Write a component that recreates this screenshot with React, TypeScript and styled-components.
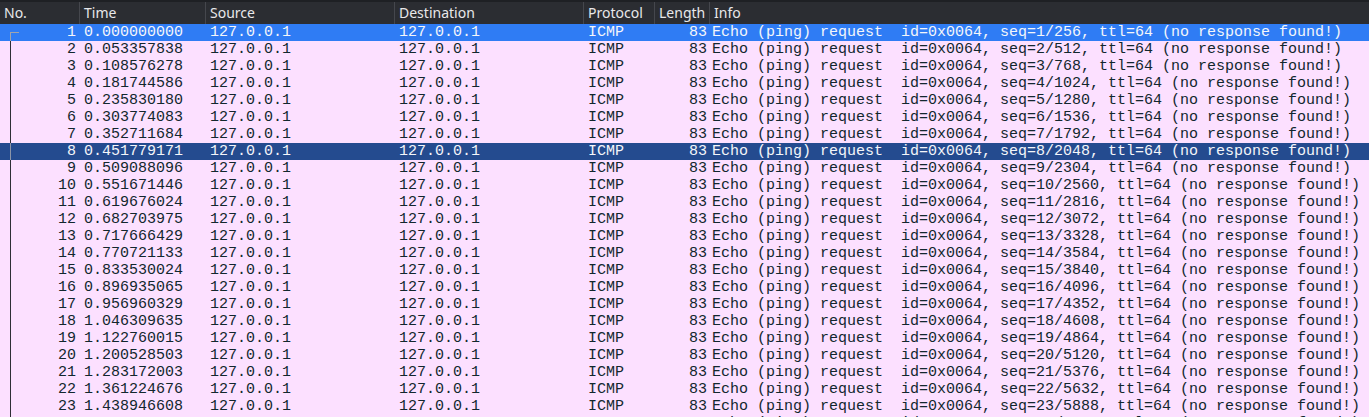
import React from "react";
import styled, { createGlobalStyle } from "styled-components";

const GlobalStyle = createGlobalStyle`
  html, body { margin: 0; padding: 0; background: #fce0ff; }
  body { overflow: hidden; height: 417px; }
`;

const COLS = "80px 126px 189px 189px 71px 55px 1fr";

const Wrap = styled.div`
  width: 1369px;
  height: 417px;
  overflow: hidden;
  background: #fce0ff;
`;

const TopStrip = styled.div`
  height: 2px;
  background: #1e2024;
`;

const Header = styled.div`
  display: grid;
  grid-template-columns: ${COLS};
  height: 22px;
  background: #2b2d32;
`;

const HeadCell = styled.div<{ $last?: boolean }>`
  font-family: "Noto Sans", "Open Sans", sans-serif;
  font-size: 14px;
  line-height: 22px;
  color: #e8e8ea;
  padding-left: 4px;
  border-right: ${(p) => (p.$last ? "none" : "1px solid #45474d")};
  white-space: nowrap;
  overflow: hidden;
`;

type Sel = "none" | "focus" | "dim";

const Row = styled.div<{ $sel: Sel }>`
  display: grid;
  grid-template-columns: ${COLS};
  height: 17px;
  background: ${(p) =>
    p.$sel === "focus" ? "#2f7cf4" : p.$sel === "dim" ? "#244b8f" : "#fce0ff"};
  color: ${(p) => (p.$sel === "none" ? "#12272e" : "#f4f6fa")};
`;

const Cell = styled.div<{ $right?: boolean; $pr?: number }>`
  position: relative;
  font-family: "Liberation Mono", "DejaVu Sans Mono", monospace;
  font-size: 15px;
  line-height: 17px;
  white-space: pre;
  overflow: hidden;
  text-align: ${(p) => (p.$right ? "right" : "left")};
  padding-left: ${(p) => (p.$right ? 0 : 4)}px;
  padding-right: ${(p) => p.$pr ?? 0}px;
`;

const InfoCell = styled(Cell)`
  padding-left: 2px;
`;

const TreeLine = styled.span<{ $first: boolean; $color: string }>`
  position: absolute;
  left: 10px;
  top: ${(p) => (p.$first ? "8px" : "0")};
  bottom: 0;
  width: ${(p) => (p.$first ? "9px" : "1px")};
  border-left: 1px solid ${(p) => p.$color};
  border-top: ${(p) => (p.$first ? `1px solid ${p.$color}` : "none")};
  box-sizing: border-box;
`;

const times = [
  "0.000000000",
  "0.053357838",
  "0.108576278",
  "0.181744586",
  "0.235830180",
  "0.303774083",
  "0.352711684",
  "0.451779171",
  "0.509088096",
  "0.551671446",
  "0.619676024",
  "0.682703975",
  "0.717666429",
  "0.770721133",
  "0.833530024",
  "0.896935065",
  "0.956960329",
  "1.046309635",
  "1.122760015",
  "1.200528503",
  "1.283172003",
  "1.361224676",
  "1.438946608",
  "1.517203391",
];

const headers = ["No.", "Time", "Source", "Destination", "Protocol", "Length", "Info"];

export default function App() {
  return (
    <Wrap>
      <GlobalStyle />
      <TopStrip />
      <Header>
        {headers.map((h, i) => (
          <HeadCell key={h} $last={i === headers.length - 1}>
            {h}
          </HeadCell>
        ))}
      </Header>
      {times.map((t, i) => {
        const n = i + 1;
        const sel: Sel = n === 1 ? "focus" : n === 8 ? "dim" : "none";
        const lineColor = n === 1 ? "#a0a4ac" : n === 8 ? "#8c95a8" : "#2e2e36";
        return (
          <Row key={n} $sel={sel}>
            <Cell $right $pr={4}>
              <TreeLine $first={n === 1} $color={lineColor} />
              {n}
            </Cell>
            <Cell>{t}</Cell>
            <Cell>127.0.0.1</Cell>
            <Cell>127.0.0.1</Cell>
            <Cell>ICMP</Cell>
            <Cell $right $pr={3}>83</Cell>
            <InfoCell>
              {`Echo (ping) request  id=0x0064, seq=${n}/${n * 256}, ttl=64 (no response found!)`}
            </InfoCell>
          </Row>
        );
      })}
    </Wrap>
  );
}
